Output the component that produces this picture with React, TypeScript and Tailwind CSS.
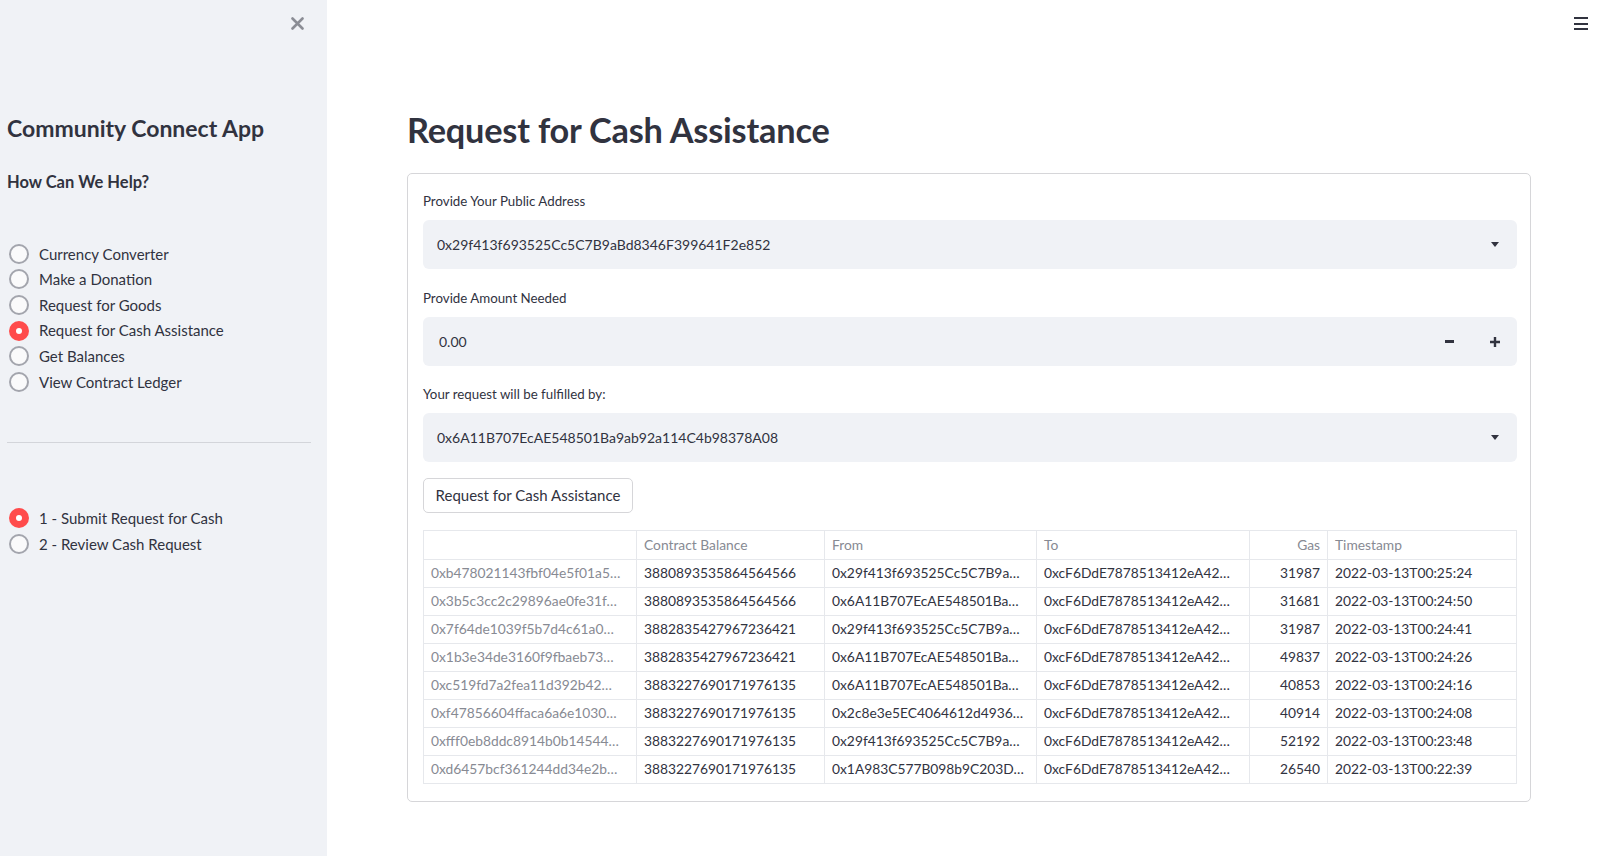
import React from 'react';

const txs = [
  ['0xb478021143fbf04e5f01a5…', '3880893535864564566', '0x29f413f693525Cc5C7B9a…', '31987', '2022-03-13T00:25:24'],
  ['0x3b5c3cc2c29896ae0fe31f…', '3880893535864564566', '0x6A11B707EcAE548501Ba…', '31681', '2022-03-13T00:24:50'],
  ['0x7f64de1039f5b7d4c61a0…', '3882835427967236421', '0x29f413f693525Cc5C7B9a…', '31987', '2022-03-13T00:24:41'],
  ['0x1b3e34de3160f9fbaeb73…', '3882835427967236421', '0x6A11B707EcAE548501Ba…', '49837', '2022-03-13T00:24:26'],
  ['0xc519fd7a2fea11d392b42…', '3883227690171976135', '0x6A11B707EcAE548501Ba…', '40853', '2022-03-13T00:24:16'],
  ['0xf47856604ffaca6a6e1030…', '3883227690171976135', '0x2c8e3e5EC4064612d4936…', '40914', '2022-03-13T00:24:08'],
  ['0xfff0eb8ddc8914b0b14544…', '3883227690171976135', '0x29f413f693525Cc5C7B9a…', '52192', '2022-03-13T00:23:48'],
  ['0xd6457bcf361244dd34e2b…', '3883227690171976135', '0x1A983C577B098b9C203D…', '26540', '2022-03-13T00:22:39'],
];

const TO = '0xcF6DdE7878513412eA42…';

function Radio({ label, checked }: { label: string; checked?: boolean }) {
  return (
    <div className="flex items-center h-[25.6px]">
      {checked ? (
        <span className="ml-[2px] w-5 h-5 rounded-full bg-[#ff4b4b] flex items-center justify-center">
          <span className="w-[6px] h-[6px] rounded-full bg-white" />
        </span>
      ) : (
        <span className="ml-[2px] w-5 h-5 rounded-full border-2 border-[#a3a5ad] bg-[#fafafb]" />
      )}
      <span className="ml-[10px] text-[15px]">{label}</span>
    </div>
  );
}

function Caret() {
  return (
    <svg width="8" height="5" viewBox="0 0 8 5" className="shrink-0">
      <path d="M0 0h8L4 5z" fill="#31333f" />
    </svg>
  );
}

function Field({ label, children }: { label: string; children: React.ReactNode }) {
  return (
    <div>
      <div className="h-5 leading-5 text-[13.3px] mb-[9px]">{label}</div>
      {children}
    </div>
  );
}

export default function App() {
  return (
    <div className="flex w-full h-[856px] bg-white text-[#31333f] font-['Lato',sans-serif] overflow-hidden">
      {/* sidebar */}
      <aside className="w-[327px] shrink-0 bg-[#f0f2f6] pl-[7px] pr-[16px]">
        <div className="h-[46px] flex items-center justify-end pr-[7px]">
          <svg width="13" height="13" viewBox="0 0 13 13">
            <path d="M1.5 1.5l10 10M11.5 1.5l-10 10" stroke="#8b8d95" strokeWidth="2.6" strokeLinecap="round" />
          </svg>
        </div>
        <h2 className="mt-[65px] h-[34px] leading-[34px] text-[23px] font-bold">Community Connect App</h2>
        <h3 className="mt-[23px] h-[28px] leading-[28px] text-[16.5px] font-bold">How Can We Help?</h3>
        <div className="mt-[45px]">
          <Radio label="Currency Converter" />
          <Radio label="Make a Donation" />
          <Radio label="Request for Goods" />
          <Radio label="Request for Cash Assistance" checked />
          <Radio label="Get Balances" />
          <Radio label="View Contract Ledger" />
        </div>
        <div className="mt-[47px] border-t border-[#d3d5da]" />
        <div className="mt-[63px]">
          <Radio label="1 - Submit Request for Cash" checked />
          <Radio label="2 - Review Cash Request" />
        </div>
      </aside>

      {/* main */}
      <main className="relative flex-1 pl-[80px] pr-[83px] pt-[108px]">
        <button className="absolute top-[17px] right-[26px] w-[14px] h-[13px] flex flex-col justify-between">
          <span className="block h-[2px] w-full bg-[#31333f]" />
          <span className="block h-[2px] w-full bg-[#31333f]" />
          <span className="block h-[2px] w-full bg-[#31333f]" />
        </button>

        <h1 className="h-[44px] leading-[44px] text-[34.3px] font-bold tracking-[-0.2px]">Request for Cash Assistance</h1>

        <div className="mt-[21px] border border-[#d6d6d9] rounded-[5px] pl-[15px] pr-[13px] pt-[17px] pb-[17px]">
          <Field label="Provide Your Public Address">
            <div className="h-[49px] bg-[#f0f2f6] rounded-[6px] flex items-center pl-[14px] pr-[18px]">
              <span className="flex-1 text-[14px]">0x29f413f693525Cc5C7B9aBd8346F399641F2e852</span>
              <Caret />
            </div>
          </Field>

          <div className="mt-[19px]">
            <Field label="Provide Amount Needed">
              <div className="h-[49px] bg-[#f0f2f6] rounded-[6px] flex items-center">
                <span className="flex-1 pl-[16px] text-[14px]">0.00</span>
                <span className="w-[45px] h-full flex items-center justify-center">
                  <span className="block w-[9px] h-[2.5px] bg-[#31333f]" />
                </span>
                <span className="w-[45px] h-full flex items-center justify-center">
                  <svg width="10" height="10" viewBox="0 0 10 10">
                    <path d="M5 0v10M0 5h10" stroke="#31333f" strokeWidth="2.4" />
                  </svg>
                </span>
              </div>
            </Field>
          </div>

          <div className="mt-[18px]">
            <Field label="Your request will be fulfilled by:">
              <div className="h-[49px] bg-[#f0f2f6] rounded-[6px] flex items-center pl-[14px] pr-[18px]">
                <span className="flex-1 text-[14px]">0x6A11B707EcAE548501Ba9ab92a114C4b98378A08</span>
                <Caret />
              </div>
            </Field>
          </div>

          <button className="mt-[16px] h-[35px] w-[210px] border border-[#d6d6d9] rounded-[5px] bg-white text-[15px] flex items-center justify-center">
            Request for Cash Assistance
          </button>

          <table className="mt-[17px] w-full table-fixed border-collapse text-[13.8px]">
            <colgroup>
              <col className="w-[213px]" />
              <col className="w-[188px]" />
              <col className="w-[212px]" />
              <col className="w-[213px]" />
              <col className="w-[78px]" />
              <col />
            </colgroup>
            <thead>
              <tr className="h-[29px] text-[#878a93]">
                <th className="border border-[#e6e8ec] font-normal" />
                <th className="border border-[#e6e8ec] font-normal text-left px-[7px]">Contract Balance</th>
                <th className="border border-[#e6e8ec] font-normal text-left px-[7px]">From</th>
                <th className="border border-[#e6e8ec] font-normal text-left px-[7px]">To</th>
                <th className="border border-[#e6e8ec] font-normal text-right px-[7px]">Gas</th>
                <th className="border border-[#e6e8ec] font-normal text-left px-[7px]">Timestamp</th>
              </tr>
            </thead>
            <tbody>
              {txs.map(r => (
                <tr key={r[0]} className="h-[28px]">
                  <td className="border border-[#e6e8ec] px-[7px] text-[#878a93] truncate">{r[0]}</td>
                  <td className="border border-[#e6e8ec] px-[7px] truncate">{r[1]}</td>
                  <td className="border border-[#e6e8ec] px-[7px] truncate">{r[2]}</td>
                  <td className="border border-[#e6e8ec] px-[7px] truncate">{TO}</td>
                  <td className="border border-[#e6e8ec] px-[7px] text-right">{r[3]}</td>
                  <td className="border border-[#e6e8ec] px-[7px] truncate">{r[4]}</td>
                </tr>
              ))}
            </tbody>
          </table>
        </div>
      </main>
    </div>
  );
}
